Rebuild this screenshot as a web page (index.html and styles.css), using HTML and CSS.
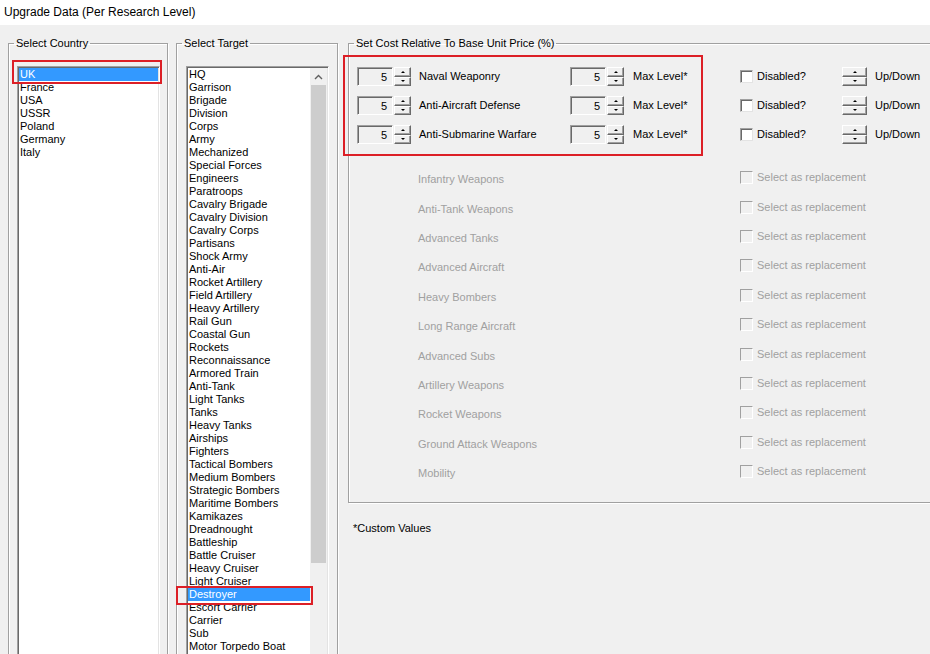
FILE: index.html
```html
<!DOCTYPE html>
<html lang="en">
<head>
    <meta charset="UTF-8">
    <title>Upgrade Data (Per Research Level)</title>
    <link rel="stylesheet" href="styles.css">
</head>
<body>
    <div class="titlebar">Upgrade Data (Per Research Level)</div>

    <div class="main">
        <!-- country list -->
        <fieldset class="group group-country">
            <legend>Select Country</legend>
            <ul class="listbox listbox-country">
                <li class="selected mark-uk">UK</li>
                <li>France</li>
                <li>USA</li>
                <li>USSR</li>
                <li>Poland</li>
                <li>Germany</li>
                <li>Italy</li>
            </ul>
        </fieldset>

        <!-- target list -->
        <fieldset class="group group-target">
            <legend>Select Target</legend>
            <div class="listbox listbox-target">
                <ul class="items">
                    <li>HQ</li>
                    <li>Garrison</li>
                    <li>Brigade</li>
                    <li>Division</li>
                    <li>Corps</li>
                    <li>Army</li>
                    <li>Mechanized</li>
                    <li>Special Forces</li>
                    <li>Engineers</li>
                    <li>Paratroops</li>
                    <li>Cavalry Brigade</li>
                    <li>Cavalry Division</li>
                    <li>Cavalry Corps</li>
                    <li>Partisans</li>
                    <li>Shock Army</li>
                    <li>Anti-Air</li>
                    <li>Rocket Artillery</li>
                    <li>Field Artillery</li>
                    <li>Heavy Artillery</li>
                    <li>Rail Gun</li>
                    <li>Coastal Gun</li>
                    <li>Rockets</li>
                    <li>Reconnaissance</li>
                    <li>Armored Train</li>
                    <li>Anti-Tank</li>
                    <li>Light Tanks</li>
                    <li>Tanks</li>
                    <li>Heavy Tanks</li>
                    <li>Airships</li>
                    <li>Fighters</li>
                    <li>Tactical Bombers</li>
                    <li>Medium Bombers</li>
                    <li>Strategic Bombers</li>
                    <li>Maritime Bombers</li>
                    <li>Kamikazes</li>
                    <li>Dreadnought</li>
                    <li>Battleship</li>
                    <li>Battle Cruiser</li>
                    <li>Heavy Cruiser</li>
                    <li>Light Cruiser</li>
                    <li class="selected mark-destroyer">Destroyer</li>
                    <li>Escort Carrier</li>
                    <li>Carrier</li>
                    <li>Sub</li>
                    <li>Motor Torpedo Boat</li>
                </ul>
                <div class="scrollbar">
                    <div class="sb-arrow">
                        <svg width="9" height="6" viewBox="0 0 9 6"><polyline points="1,5 4.5,1.5 8,5" fill="none" stroke="#606060" stroke-width="1.4"/></svg>
                    </div>
                    <div class="sb-thumb"></div>
                </div>
            </div>
        </fieldset>

        <div class="right">
            <fieldset class="group group-cost">
                <legend>Set Cost Relative To Base Unit Price (%)</legend>

                <div class="cost-top">
                    <!-- custom values -->
                    <div class="marked">
                        <div class="cost-row">
                            <div class="spin"><div class="spin-input">5</div><div class="spin-btns"><span class="up"></span><span class="down"></span></div></div>
                            <span class="cost-label">Naval Weaponry</span>
                            <div class="spin"><div class="spin-input">5</div><div class="spin-btns"><span class="up"></span><span class="down"></span></div></div>
                            <span class="max-label">Max Level*</span>
                        </div>
                        <div class="cost-row">
                            <div class="spin"><div class="spin-input">5</div><div class="spin-btns"><span class="up"></span><span class="down"></span></div></div>
                            <span class="cost-label">Anti-Aircraft Defense</span>
                            <div class="spin"><div class="spin-input">5</div><div class="spin-btns"><span class="up"></span><span class="down"></span></div></div>
                            <span class="max-label">Max Level*</span>
                        </div>
                        <div class="cost-row">
                            <div class="spin"><div class="spin-input">5</div><div class="spin-btns"><span class="up"></span><span class="down"></span></div></div>
                            <span class="cost-label">Anti-Submarine Warfare</span>
                            <div class="spin"><div class="spin-input">5</div><div class="spin-btns"><span class="up"></span><span class="down"></span></div></div>
                            <span class="max-label">Max Level*</span>
                        </div>
                    </div>

                    <div class="side">
                        <div class="side-row">
                            <span class="checkbox"></span><span class="side-label">Disabled?</span>
                            <div class="spin-btns wide"><span class="up"></span><span class="down"></span></div>
                            <span class="updown-label">Up/Down</span>
                        </div>
                        <div class="side-row">
                            <span class="checkbox"></span><span class="side-label">Disabled?</span>
                            <div class="spin-btns wide"><span class="up"></span><span class="down"></span></div>
                            <span class="updown-label">Up/Down</span>
                        </div>
                        <div class="side-row">
                            <span class="checkbox"></span><span class="side-label">Disabled?</span>
                            <div class="spin-btns wide"><span class="up"></span><span class="down"></span></div>
                            <span class="updown-label">Up/Down</span>
                        </div>
                    </div>
                </div>

                <!-- replacement rows (disabled) -->
                <div class="replacements">
                    <div class="rep-row"><span class="rep-label">Infantry Weapons</span><span class="rep-check"><span class="checkbox off"></span>Select as replacement</span></div>
                    <div class="rep-row"><span class="rep-label">Anti-Tank Weapons</span><span class="rep-check"><span class="checkbox off"></span>Select as replacement</span></div>
                    <div class="rep-row"><span class="rep-label">Advanced Tanks</span><span class="rep-check"><span class="checkbox off"></span>Select as replacement</span></div>
                    <div class="rep-row"><span class="rep-label">Advanced Aircraft</span><span class="rep-check"><span class="checkbox off"></span>Select as replacement</span></div>
                    <div class="rep-row"><span class="rep-label">Heavy Bombers</span><span class="rep-check"><span class="checkbox off"></span>Select as replacement</span></div>
                    <div class="rep-row"><span class="rep-label">Long Range Aircraft</span><span class="rep-check"><span class="checkbox off"></span>Select as replacement</span></div>
                    <div class="rep-row"><span class="rep-label">Advanced Subs</span><span class="rep-check"><span class="checkbox off"></span>Select as replacement</span></div>
                    <div class="rep-row"><span class="rep-label">Artillery Weapons</span><span class="rep-check"><span class="checkbox off"></span>Select as replacement</span></div>
                    <div class="rep-row"><span class="rep-label">Rocket Weapons</span><span class="rep-check"><span class="checkbox off"></span>Select as replacement</span></div>
                    <div class="rep-row"><span class="rep-label">Ground Attack Weapons</span><span class="rep-check"><span class="checkbox off"></span>Select as replacement</span></div>
                    <div class="rep-row"><span class="rep-label">Mobility</span><span class="rep-check"><span class="checkbox off"></span>Select as replacement</span></div>
                </div>
            </fieldset>

            <p class="note">*Custom Values</p>
        </div>
    </div>
</body>
</html>
```

FILE: styles.css
```css
/* base */
html {
    overflow: hidden;
}

body {
    margin: 0;
    height: 654px;
    overflow: hidden;
    background-color: #f0f0f0;
    color: #000;
    font-family: 'Liberation Sans', Tahoma, sans-serif;
    font-size: 11px;
    line-height: 13px;
}

.titlebar {
    height: 25px;
    line-height: 24px;
    padding-left: 4px;
    background-color: #fff;
    font-size: 12px;
}

.main {
    display: flex;
    align-items: flex-start;
    height: 629px;
    overflow: hidden;
    padding-left: 8px;
}

/* group boxes */
.group {
    box-sizing: border-box;
    flex-shrink: 0;
    margin: 12px 0 0 0;
    padding: 0;
    border: 1px solid #a0a0a0;
    box-shadow: inset 1px 1px 0 #fff, 1px 1px 0 #fff;
    min-width: 0;
}

.group legend {
    margin-left: 5px;
    padding: 0 2px;
    line-height: 13px;
}

.group-country {
    width: 160px;
    height: 620px;
    padding-top: 16px;
}

.group-target {
    width: 162px;
    height: 620px;
    margin-left: 8px;
    padding-top: 16px;
}

.right {
    flex-shrink: 0;
    margin-left: 10px;
}

.group-cost {
    width: 600px;
    height: 466px;
    padding-top: 5px;
}

/* list boxes */
.listbox {
    box-sizing: border-box;
    width: 143px;
    height: 600px;
    margin: 0;
    list-style: none;
    background-color: #fff;
    border: 1px solid;
    border-color: #a0a0a0 #fff #fff #a0a0a0;
    box-shadow: inset 1px 1px 0 #696969, inset -1px -1px 0 #e3e3e3;
    padding: 1px;
}

.listbox-country {
    margin-left: 8px;
}

.listbox-target {
    margin-left: 9px;
    display: flex;
    align-items: flex-start;
}

.listbox li {
    height: 13px;
    padding-left: 1px;
    white-space: nowrap;
}

.items {
    flex: 1;
    margin: 0;
    padding: 0;
    list-style: none;
}

.listbox li.selected {
    position: relative;
    background-color: #3399ff;
    color: #fff;
}

/* red annotation frames */
.selected::after {
    content: "";
    position: absolute;
    border: 2px solid #dc1f26;
}

.mark-uk::after {
    top: -8px;
    bottom: -3px;
    left: -7px;
    right: -4px;
}

.mark-destroyer::after {
    top: -2px;
    bottom: -4px;
    left: -12px;
    right: -3px;
}

.scrollbar {
    width: 17px;
    height: 596px;
    background-color: #f0f0f0;
    display: flex;
    flex-direction: column;
}

.sb-arrow {
    height: 17px;
    display: flex;
    align-items: center;
    justify-content: center;
}

.sb-thumb {
    height: 478px;
    margin: 0 1px;
    background-color: #cdcdcd;
}

/* cost area */
.cost-top {
    display: flex;
    align-items: flex-start;
}

.marked {
    box-sizing: border-box;
    flex-shrink: 0;
    width: 360px;
    margin-left: -6px;
    padding: 10px 0 10px 12px;
    border: 2px solid #dc1f26;
    display: flex;
    flex-direction: column;
    gap: 10px;
}

.cost-row,
.side-row {
    height: 19px;
    display: flex;
    align-items: center;
}

.spin {
    display: flex;
}

.spin-input {
    box-sizing: border-box;
    width: 36px;
    height: 19px;
    padding: 3px 5px 0 0;
    text-align: right;
    background-color: #f0f0f0;
    border: 1px solid;
    border-color: #a0a0a0 #fff #fff #a0a0a0;
    box-shadow: inset 1px 1px 0 #696969;
}

.spin-btns {
    width: 17px;
    height: 19px;
    margin-left: 1px;
    display: flex;
    flex-direction: column;
}

.spin-btns.wide {
    width: 25px;
    margin-left: 0;
}

.spin-btns span {
    box-sizing: border-box;
    flex: 1;
    display: flex;
    align-items: center;
    justify-content: center;
    background-color: #f0f0f0;
    border: 1px solid;
    border-color: #fff #696969 #696969 #fff;
    box-shadow: inset -1px -1px 0 #a0a0a0;
}

.spin-btns .up::before {
    content: "";
    border-left: 2px solid transparent;
    border-right: 2px solid transparent;
    border-bottom: 2px solid #000;
}

.spin-btns .down::before {
    content: "";
    border-left: 2px solid transparent;
    border-right: 2px solid transparent;
    border-top: 2px solid #000;
}

.cost-label {
    width: 151px;
    margin-left: 8px;
}

.max-label {
    margin-left: 9px;
}

.side {
    flex-shrink: 0;
    padding-top: 12px;
    margin-left: 37px;
    display: flex;
    flex-direction: column;
    gap: 10px;
}

.checkbox {
    box-sizing: border-box;
    flex-shrink: 0;
    width: 13px;
    height: 13px;
    background-color: #fff;
    border: 1px solid;
    border-color: #a0a0a0 #e3e3e3 #e3e3e3 #a0a0a0;
    box-shadow: inset 1px 1px 0 #696969;
}

.checkbox.off {
    background-color: #f0f0f0;
    border-color: #a0a0a0 #fff #fff #a0a0a0;
    box-shadow: none;
}

.side-label {
    width: 85px;
    margin-left: 4px;
}

.updown-label {
    margin-left: 8px;
}

/* replacement rows */
.replacements {
    margin-top: 9px;
    padding-left: 69px;
}

.rep-row {
    height: 29.4px;
    display: flex;
    align-items: center;
    color: #a0a0a0;
}

.rep-label {
    flex-shrink: 0;
    width: 322px;
}

.rep-check {
    display: flex;
    align-items: center;
    gap: 4px;
    margin-bottom: 4px;
}

.note {
    margin: 19px 0 0 0;
    padding-left: 5px;
}
```
